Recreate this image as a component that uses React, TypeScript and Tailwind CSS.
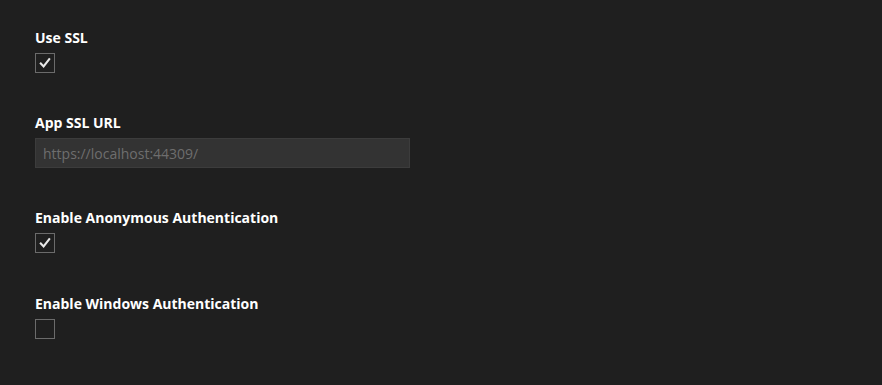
import React from 'react';

type Field =
  | { id: string; label: string; kind: 'checkbox'; checked: boolean; gap: string }
  | { id: string; label: string; kind: 'text'; value: string; gap: string };

const fields: Field[] = [
  { id: 'ssl', label: 'Use SSL', kind: 'checkbox', checked: true, gap: 'mb-10' },
  { id: 'sslUrl', label: 'App SSL URL', kind: 'text', value: 'https://localhost:44309/', gap: 'mb-10' },
  { id: 'anon', label: 'Enable Anonymous Authentication', kind: 'checkbox', checked: true, gap: 'mb-[41px]' },
  { id: 'win', label: 'Enable Windows Authentication', kind: 'checkbox', checked: false, gap: 'mb-10' },
];

const CheckBox: React.FC<{ checked: boolean }> = ({ checked }) => (
  <div className="w-5 h-5 border border-[#6b6b6b] bg-[#1f1f1f] flex items-center justify-center">
    {checked && (
      <svg width="14" height="14" viewBox="0 0 14 14" fill="none">
        <path d="M2.8 7.6 L5.6 10.4 L11.2 3.2" stroke="#e8e8e8" strokeWidth="2.1" strokeLinecap="square" />
      </svg>
    )}
  </div>
);

export default function App() {
  return (
    <div
      className="w-full min-h-screen bg-[#1f1f1f] pl-[35px] pt-[28px]"
      style={{ fontFamily: '"Segoe UI", "Open Sans", sans-serif' }}
    >
      {fields.map((f) => (
        <div key={f.id} className={`${f.gap} flex flex-col`}>
          <label className="text-[14px] leading-5 font-bold text-white mb-[5px]">{f.label}</label>
          {f.kind === 'checkbox' ? (
            <CheckBox checked={f.checked} />
          ) : (
            <div className="w-[375px] h-[30px] bg-[#333333] border border-[#3c3c3c] flex items-center px-[7px] text-[14px] text-[#6e6e6e]">
              {f.value}
            </div>
          )}
        </div>
      ))}
    </div>
  );
}
